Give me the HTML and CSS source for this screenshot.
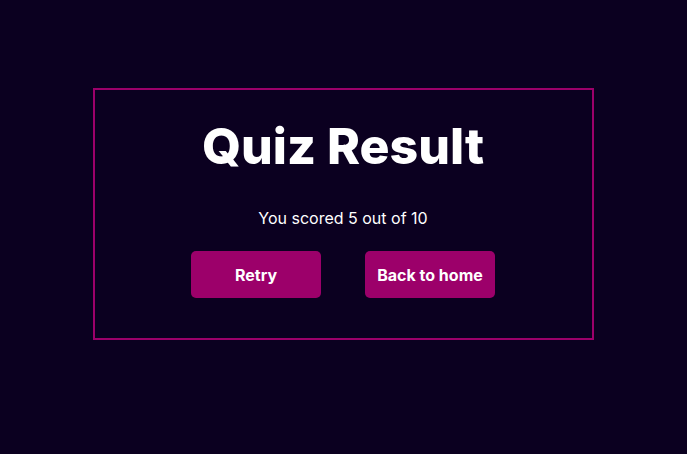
FILE: index.html
```html
<!DOCTYPE html>
<html lang="en">
<head>
<meta charset="utf-8">
<title>Quiz Result</title>
<link rel="stylesheet" href="styles.css">
</head>
<body>
  <main class="result">
    <h1 class="result-title">Quiz Result</h1>
    <p class="result-score">You scored 5 out of 10</p>
    <div class="result-actions">
      <button class="btn">Retry</button>
      <button class="btn">Back to home</button>
    </div>
  </main>
</body>
</html>
```
FILE: styles.css
```css
html, body {
  margin: 0;
  padding: 0;
  background: #0b0020;
  height: 100%;
}
body {
  font-family: "Inter", "Noto Sans", sans-serif;
  color: #ffffff;
  padding-top: 88px;
  box-sizing: border-box;
}
.result {
  width: 501px;
  height: 252px;
  margin: 0 auto;
  border: 2px solid #9c006a;
  box-sizing: border-box;
  display: flex;
  flex-direction: column;
  align-items: center;
  padding: 26px 1px 0 0;
}
.result-title {
  margin: 0;
  font-size: 50px;
  font-weight: 800;
  line-height: 60px;
  letter-spacing: 0;
}
.result-score {
  margin: 32px 0 0;
  font-size: 16px;
  line-height: 20px;
}
.result-actions {
  display: flex;
  gap: 44px;
  margin-top: 23px;
}
.btn {
  width: 130px;
  height: 47px;
  border: none;
  border-radius: 5px;
  background: #9c006a;
  color: #ffffff;
  font-family: inherit;
  font-size: 16px;
  font-weight: 700;
}
```
